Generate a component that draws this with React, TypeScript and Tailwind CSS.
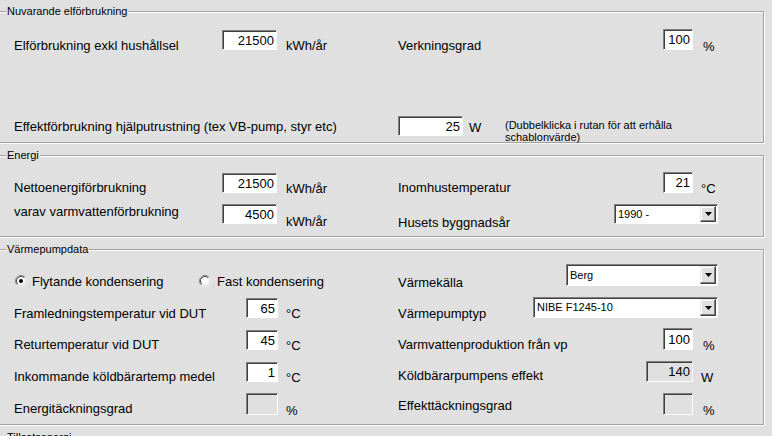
import React from "react";

const FONT = "font-['Liberation_Sans',Arial,sans-serif]";

function Field({ value = "", disabled = false, className = "" }: { value?: string; disabled?: boolean; className?: string }) {
  return (
    <div
      className={`shrink-0 box-border border border-t-[#808080] border-l-[#808080] border-b-white border-r-white shadow-[inset_1px_1px_0_#404040] ${
        disabled ? "bg-[#e0e0e0]" : "bg-white"
      } flex items-center justify-end pr-[2px] text-[13px] leading-[15px] text-black ${className}`}
    >
      {value}
    </div>
  );
}

function Arrow() {
  return (
    <div className="shrink-0 w-[16px] h-full box-border border border-t-[#e8e8e8] border-l-[#e8e8e8] border-b-[#404040] border-r-[#404040] shadow-[inset_-1px_-1px_0_#808080,inset_1px_1px_0_#fff] bg-[#e0e0e0] flex items-center justify-center">
      <svg width="7" height="4" viewBox="0 0 7 4">
        <polygon points="0,0 7,0 3.5,4" fill="#000" />
      </svg>
    </div>
  );
}

function Select({ value, className = "" }: { value: string; className?: string }) {
  return (
    <div
      className={`shrink-0 box-border border border-t-[#808080] border-l-[#808080] border-b-white border-r-white shadow-[inset_1px_1px_0_#404040] bg-white flex p-[1px] ${className}`}
    >
      <div className="flex-1 flex items-center pl-[2px] text-[11px] leading-[13px] text-black">{value}</div>
      <Arrow />
    </div>
  );
}

function Radio({ checked }: { checked: boolean }) {
  return (
    <svg width="12" height="12" viewBox="0 0 12 12" className="shrink-0">
      <circle cx="6" cy="6" r="5.5" fill="#fff" />
      <path d="M2.1 9.9 A5.5 5.5 0 0 1 9.9 2.1" stroke="#808080" strokeWidth="1" fill="none" />
      <path d="M2.8 9.2 A4.5 4.5 0 0 1 9.2 2.8" stroke="#404040" strokeWidth="1" fill="none" />
      <path d="M9.2 2.8 A4.5 4.5 0 0 1 2.8 9.2" stroke="#d8d8d8" strokeWidth="1" fill="none" />
      {checked && <circle cx="6" cy="6" r="2" fill="#000" />}
    </svg>
  );
}

function L({ children, className = "" }: { children: React.ReactNode; className?: string }) {
  return <span className={`shrink-0 whitespace-nowrap text-[13px] leading-[15px] text-black ${className}`}>{children}</span>;
}

function Group({ title, className = "", children }: { title: string; className?: string; children?: React.ReactNode }) {
  return (
    <div
      className={`relative ml-[-2px] w-[766px] shrink-0 box-border border border-[#a0a0a0] shadow-[inset_1px_1px_0_#fff,1px_1px_0_#fff] ${className}`}
    >
      <span className="absolute left-[7px] top-[-7px] px-[1px] bg-[#e0e0e0] text-[11px] leading-[13px] text-black whitespace-nowrap">
        {title}
      </span>
      {children}
    </div>
  );
}

export default function App() {
  return (
    <div className={`${FONT} w-[772px] h-[436px] overflow-hidden bg-[#e0e0e0] pt-[11px] flex flex-col`}>
      {/* Group 1 */}
      <Group title="Nuvarande elförbrukning" className="h-[132px] pt-[17px] pl-[15px] flex flex-col">
        <div className="flex items-start h-[21px]">
          <L className="w-[208px] mt-[9px]">Elförbrukning exkl hushållsel</L>
          <Field value="21500" className="w-[55px] h-[20px] mt-[1px]" />
          <L className="w-[112px] ml-[9px] mt-[9px]">kWh/år</L>
          <L className="w-[265px] mt-[9px]">Verkningsgrad</L>
          <Field value="100" className="w-[30px] h-[21px]" />
          <L className="ml-[10px] mt-[10px]">%</L>
        </div>
        <div className="flex items-start h-[26px] mt-[66px]">
          <L className="w-[384px] mt-[3px]">Effektförbrukning hjälputrustning (tex VB-pump, styr etc)</L>
          <Field value="25" className="w-[65px] h-[20px]" />
          <L className="w-[36px] ml-[6px] mt-[4px]">W</L>
          <div className="mt-[3px] text-[11px] leading-[12px] text-black">
            (Dubbelklicka i rutan för att erhålla
            <br />
            schablonvärde)
          </div>
        </div>
      </Group>

      {/* Group 2 */}
      <Group title="Energi" className="h-[82px] mt-[12px] pt-[16px] pl-[15px] flex flex-col">
        <div className="flex items-start h-[21px]">
          <L className="w-[208px] mt-[8px]">Nettoenergiförbrukning</L>
          <Field value="21500" className="w-[55px] h-[20px] mt-[1px]" />
          <L className="w-[112px] ml-[9px] mt-[9px]">kWh/år</L>
          <L className="w-[265px] mt-[8px]">Inomhustemperatur</L>
          <Field value="21" className="w-[30px] h-[21px]" />
          <L className="ml-[8px] mt-[9px]">°C</L>
        </div>
        <div className="flex items-start h-[20px] mt-[11px]">
          <L className="w-[208px] mt-[0px]">varav varmvattenförbrukning</L>
          <Field value="4500" className="w-[55px] h-[20px]" />
          <L className="w-[112px] ml-[9px] mt-[10px]">kWh/år</L>
          <L className="w-[216px] mt-[11px]">Husets byggnadsår</L>
          <Select value="1990 -" className="w-[104px] h-[20px]" />
        </div>
      </Group>

      {/* Group 3 */}
      <Group title="Värmepumpdata" className="h-[176px] mt-[12px] pt-[14px] pl-[15px] flex flex-col">
        <div className="flex items-start h-[22px]">
          <div className="w-[384px] flex items-start shrink-0">
            <div className="ml-[1px] mt-[11px]">
              <Radio checked />
            </div>
            <L className="ml-[5px] mt-[10px] w-[167px]">Flytande kondensering</L>
            <div className="mt-[11px]">
              <Radio checked={false} />
            </div>
            <L className="ml-[6px] mt-[10px]">Fast kondensering</L>
          </div>
          <L className="w-[168px] mt-[11px]">Värmekälla</L>
          <Select value="Berg" className="w-[152px] h-[22px]" />
        </div>
        <div className="flex items-start h-[21px] mt-[11px]">
          <L className="w-[232px] mt-[9px]">Framledningstemperatur vid DUT</L>
          <Field value="65" className="w-[32px] h-[20px] mt-[1px]" />
          <L className="w-[112px] ml-[8px] mt-[9px]">°C</L>
          <L className="w-[135px] mt-[9px]">Värmepumptyp</L>
          <Select value="NIBE F1245-10" className="w-[185px] h-[21px]" />
        </div>
        <div className="flex items-start h-[22px] mt-[10px]">
          <L className="w-[232px] mt-[9px]">Returtemperatur vid DUT</L>
          <Field value="45" className="w-[32px] h-[20px] mt-[2px]" />
          <L className="w-[112px] ml-[8px] mt-[10px]">°C</L>
          <L className="w-[265px] mt-[9px]">Varmvattenproduktion från vp</L>
          <Field value="100" className="w-[30px] h-[22px]" />
          <L className="ml-[10px] mt-[10px]">%</L>
        </div>
        <div className="flex items-start h-[21px] mt-[11px]">
          <L className="w-[232px] mt-[8px]">Inkommande köldbärartemp medel</L>
          <Field value="1" className="w-[32px] h-[20px] mt-[1px]" />
          <L className="w-[112px] ml-[8px] mt-[9px]">°C</L>
          <L className="w-[248px] mt-[7px]">Köldbärarpumpens effekt</L>
          <Field value="140" disabled className="w-[47px] h-[21px]" />
          <L className="ml-[8px] mt-[9px]">W</L>
        </div>
        <div className="flex items-start h-[22px] mt-[11px]">
          <L className="w-[232px] mt-[8px]">Energitäckningsgrad</L>
          <Field disabled className="w-[32px] h-[22px]" />
          <L className="w-[112px] ml-[8px] mt-[10px]">%</L>
          <L className="w-[265px] mt-[5px]">Effekttäckningsgrad</L>
          <Field disabled className="w-[30px] h-[22px]" />
          <L className="ml-[10px] mt-[10px]">%</L>
        </div>
      </Group>

      {/* Group 4 */}
      <Group title="Tillsatsenergi" className="h-[60px] mt-[12px]" />
    </div>
  );
}
